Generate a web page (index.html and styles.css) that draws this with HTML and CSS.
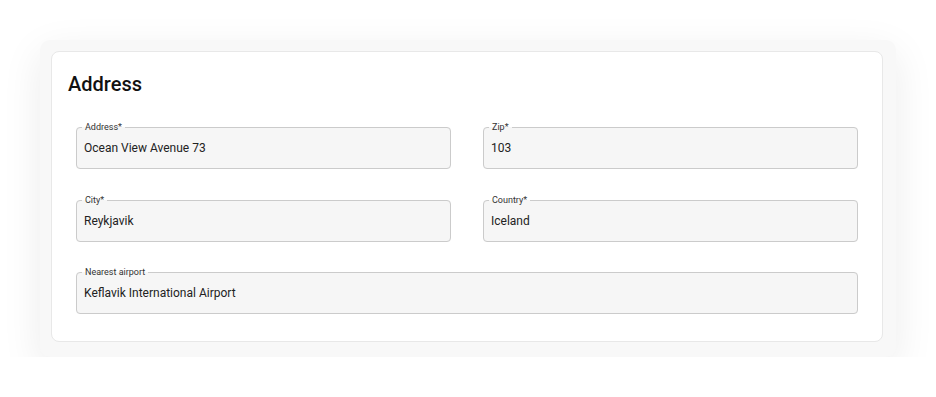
FILE: index.html
```html
<!DOCTYPE html>
<html lang="en">
<head>
    <meta charset="UTF-8">
    <meta name="viewport" content="width=device-width, initial-scale=1.0">
    <title>Address</title>
    <link rel="stylesheet" href="styles.css">
</head>
<body>
    <div class="outer">
        <div class="card">
            <h2>Address</h2>
            <div class="fields">
                <fieldset class="field">
                    <legend>Address*</legend>
                    <div class="value">Ocean View Avenue 73</div>
                </fieldset>
                <fieldset class="field">
                    <legend>Zip*</legend>
                    <div class="value">103</div>
                </fieldset>
                <fieldset class="field">
                    <legend>City*</legend>
                    <div class="value">Reykjavik</div>
                </fieldset>
                <fieldset class="field">
                    <legend>Country*</legend>
                    <div class="value">Iceland</div>
                </fieldset>
                <fieldset class="field wide">
                    <legend>Nearest airport</legend>
                    <div class="value">Keflavik International Airport</div>
                </fieldset>
            </div>
        </div>
    </div>
</body>
</html>
```

FILE: styles.css
```css
* {
    margin: 0;
    padding: 0;
    box-sizing: border-box;
}

body {
    background-color: #fff;
    font-family: Roboto, "Liberation Sans", sans-serif;
    color: #222;
}

.outer {
    width: 856px;
    margin: 40px 0 0 40px;
    padding: 11px 13px 15px 11px;
    background-color: #f8f8f8;
    border-radius: 10px;
    box-shadow: 0 12px 40px rgba(0, 0, 0, 0.08);
}

.card {
    background-color: #fff;
    border: 1px solid #e8e8e8;
    border-radius: 8px;
    padding: 20px 24px 27px 24px;
}

.card h2 {
    font-size: 20px;
    line-height: 24px;
    font-weight: 500;
    color: #111;
    margin-left: -8px;
}

.fields {
    display: grid;
    grid-template-columns: 1fr 1fr;
    column-gap: 32px;
    row-gap: 25.5px;
    margin-top: 26px;
}

.field {
    border: 1px solid #cbcbcb;
    border-radius: 4px;
    background-color: #f6f6f6;
    padding: 0 7px;
    height: 47px;
}

.field.wide {
    grid-column: 1 / 3;
}

.field legend {
    font-size: 9px;
    line-height: 11px;
    color: #333;
    padding: 0 3px;
    margin-left: -2px;
}

.field .value {
    font-size: 12px;
    line-height: 16px;
    padding-top: 7px;
    color: #222;
}
```
